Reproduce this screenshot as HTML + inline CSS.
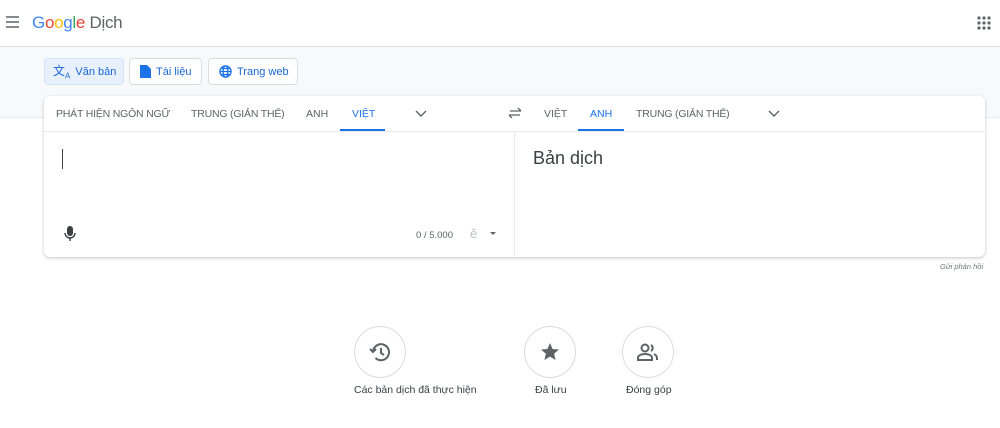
<!DOCTYPE html><html><head><meta charset="utf-8"><style>
*{box-sizing:border-box;margin:0;padding:0}
body{width:1000px;height:428px;background:#fff;font-family:"Liberation Sans",Arial,sans-serif;position:relative;overflow:hidden;color:#3c4043}
.abs{position:absolute}
.hdr{top:0;left:0;width:1000px;height:47px;border-bottom:1px solid #dadce0;background:#fff}
.band{top:47px;left:0;width:1000px;height:71px;background:#f8f9fa;border-bottom:1px solid #e8eaed}
.btn{top:58px;height:27px;border:1px solid #dadce0;border-radius:4px;background:#fff;font-size:11px;color:#1967d2;display:flex;align-items:center;padding-left:8px;gap:5px;white-space:nowrap}
.card{top:96px;left:44px;width:941px;height:161px;background:#fff;border-radius:6px;box-shadow:0 1px 3px rgba(60,64,67,.3)}
.tab{top:108px;font-size:10.5px;color:#5f6368;white-space:nowrap}
.act{color:#1a73e8}
.circ{width:52px;height:52px;border:1px solid #dadce0;border-radius:50%;top:326px;display:flex;align-items:center;justify-content:center}
.lbl{top:384px;font-size:10.5px;color:#3c4043;white-space:nowrap}
</style></head><body>
<div class="abs hdr"></div>
<svg class="abs" style="left:6px;top:16px" width="14" height="12"><path d="M0 1h13M0 6h13M0 11h13" stroke="#5f6368" stroke-width="1.6"/></svg>
<div class="abs" style="left:32px;top:13px;font-size:17px;letter-spacing:-.3px"><span style="color:#4285f4">G</span><span style="color:#ea4335">o</span><span style="color:#fbbc04">o</span><span style="color:#4285f4">g</span><span style="color:#34a853">l</span><span style="color:#ea4335">e</span> <span style="color:#5f6368">Dịch</span></div>
<svg class="abs" style="left:977px;top:16px" width="14" height="14" fill="#5f6368"><circle cx="2" cy="2" r="1.6"/><circle cx="7" cy="2" r="1.6"/><circle cx="12" cy="2" r="1.6"/><circle cx="2" cy="7" r="1.6"/><circle cx="7" cy="7" r="1.6"/><circle cx="12" cy="7" r="1.6"/><circle cx="2" cy="12" r="1.6"/><circle cx="7" cy="12" r="1.6"/><circle cx="12" cy="12" r="1.6"/></svg>
<div class="abs band"></div>
<div class="abs btn" style="left:44px;width:80px;background:#e8f0fe;border-color:#d2e3fc"><span style="font-size:12px">文<sub style="font-size:8px">A</sub></span>Văn bản</div>
<div class="abs btn" style="left:129px;width:73px;padding-left:10px"><svg width="11" height="13"><path d="M0 0h7l4 4v9H0z" fill="#1a73e8"/></svg>Tài liệu</div>
<div class="abs btn" style="left:208px;width:90px;padding-left:10px"><svg width="13" height="13" fill="none" stroke="#1a73e8" stroke-width="1.3"><circle cx="6.5" cy="6.5" r="5.6"/><ellipse cx="6.5" cy="6.5" rx="2.4" ry="5.6"/><path d="M1 6.5h11M2 3.5h9M2 9.5h9"/></svg>Trang web</div>
<div class="abs card"></div>
<div class="abs" style="left:44px;top:131px;width:941px;height:1px;background:#e8eaed"></div>
<div class="abs" style="left:514px;top:132px;width:1px;height:125px;background:#e8eaed"></div>
<div class="abs tab" style="left:56px;letter-spacing:-.2px">PHÁT HIỆN NGÔN NGỮ</div>
<div class="abs tab" style="left:191px;letter-spacing:-.2px">TRUNG (GIẢN THỂ)</div>
<div class="abs tab" style="left:306px">ANH</div>
<div class="abs tab act" style="left:352px">VIỆT</div>
<div class="abs" style="left:340px;top:129px;width:45px;height:2px;background:#1a73e8"></div>
<svg class="abs" style="left:415px;top:110px" width="12" height="8"><path d="M1 1l5 5 5-5" stroke="#5f6368" stroke-width="1.4" fill="none"/></svg>
<svg class="abs" style="left:508px;top:107px" width="14" height="12" fill="none" stroke="#5f6368" stroke-width="1.3"><path d="M2 4h11M10 1l3 3M12 8H1M4 11L1 8"/></svg>
<div class="abs tab" style="left:544px">VIỆT</div>
<div class="abs tab act" style="left:590px">ANH</div>
<div class="abs" style="left:578px;top:129px;width:46px;height:2px;background:#1a73e8"></div>
<div class="abs tab" style="left:636px;letter-spacing:-.2px">TRUNG (GIẢN THỂ)</div>
<svg class="abs" style="left:768px;top:110px" width="12" height="8"><path d="M1 1l5 5 5-5" stroke="#5f6368" stroke-width="1.4" fill="none"/></svg>
<div class="abs" style="left:62px;top:149px;width:1px;height:20px;background:#3c4043"></div>
<div class="abs" style="left:533px;top:148px;font-size:18px;color:#3c4043">Bản dịch</div>
<svg class="abs" style="left:64px;top:226px" width="12" height="16" fill="#3c4043"><rect x="3" y="0" width="6" height="10" rx="3"/><path d="M1 7a5 5 0 0 0 10 0" stroke="#3c4043" stroke-width="1.4" fill="none"/><rect x="5.3" y="11" width="1.4" height="4"/></svg>
<div class="abs" style="left:416px;top:230px;font-size:9.5px;color:#5f6368">0 / 5.000</div>
<div class="abs" style="left:470px;top:226px;font-size:13px;color:#bdc1c6">ê</div>
<svg class="abs" style="left:490px;top:232px" width="6" height="4"><path d="M0 0h6L3 3z" fill="#5f6368"/></svg>
<div class="abs" style="left:940px;top:262px;font-size:7.5px;font-style:italic;color:#70757a">Gửi phản hồi</div>
<div class="abs circ" style="left:354px"><svg width="22" height="20" fill="none" stroke="#5f6368" stroke-width="2"><path d="M4 10a8 8 0 1 1 2.5 6"/><path d="M1 7l3 3 3-3"/><path d="M12 6v5l3 2"/></svg></div>
<div class="abs circ" style="left:524px"><svg width="20" height="20"><path d="M10 1l2.6 6 6.4.5-4.9 4.2 1.5 6.3L10 14.6 4.4 18l1.5-6.3L1 7.5 7.4 7z" fill="#5f6368"/></svg></div>
<div class="abs circ" style="left:622px"><svg width="22" height="18" fill="none" stroke="#5f6368" stroke-width="2"><circle cx="8" cy="5" r="3.5"/><path d="M1 17v-2c0-3 4-4 7-4s7 1 7 4v2z"/><path d="M14 2a3.5 3.5 0 0 1 0 6M17 11c2 1 3 2 3 4v2"/></svg></div>
<div class="abs lbl" style="left:354px">Các bản dịch đã thực hiện</div>
<div class="abs lbl" style="left:535px">Đã lưu</div>
<div class="abs lbl" style="left:626px">Đóng góp</div>
</body></html>
